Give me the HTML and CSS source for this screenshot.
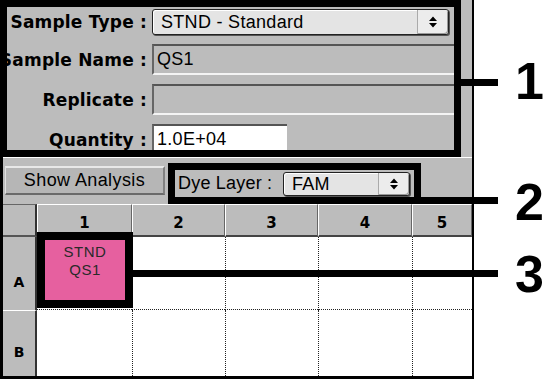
FILE: index.html
```html
<!DOCTYPE html>
<html lang="en">
<head>
    <meta charset="UTF-8">
    <meta name="viewport" content="width=device-width, initial-scale=1.0">
    <title>Sample Setup</title>
    <link rel="stylesheet" href="styles.css">
</head>
<body>
    <div class="figure">
        <div class="window">
            <!-- sample info (callout 1) -->
            <section class="panel">
                <div class="row">
                    <label class="label"><span>Sample Type :</span></label>
                    <div class="popup popup-wide">
                        <span class="popup-value">STND - Standard</span>
                        <span class="popup-arrow">
                            <svg width="10" height="14" viewBox="0 0 10 14"><path d="M1 6 L5 1.5 L9 6 Z M1 8 L5 12.5 L9 8 Z" fill="#000"/></svg>
                        </span>
                    </div>
                </div>
                <div class="row">
                    <label class="label"><span>Sample Name :</span></label>
                    <div class="field">QS1</div>
                </div>
                <div class="row">
                    <label class="label"><span>Replicate :</span></label>
                    <div class="field"></div>
                </div>
                <div class="row">
                    <label class="label"><span>Quantity :</span></label>
                    <div class="field field-white">1.0E+04</div>
                </div>
            </section>

            <div class="lower">
                <div class="toolbar">
                    <button class="btn">Show Analysis</button>
                    <!-- dye layer (callout 2) -->
                    <div class="dyebox">
                        <span class="dye-label">Dye Layer :</span>
                        <div class="popup popup-small">
                            <span class="popup-value">FAM</span>
                            <span class="popup-arrow">
                                <svg width="10" height="14" viewBox="0 0 10 14"><path d="M1 6 L5 1.5 L9 6 Z M1 8 L5 12.5 L9 8 Z" fill="#000"/></svg>
                            </span>
                        </div>
                    </div>
                </div>

                <div class="plate">
                    <div class="corner"></div>
                    <div class="colhead">1</div>
                    <div class="colhead">2</div>
                    <div class="colhead">3</div>
                    <div class="colhead">4</div>
                    <div class="colhead">5</div>

                    <div class="rowhead">A</div>
                    <div class="cell first row-a">
                        <!-- well A1 (callout 3) -->
                        <div class="well">
                            <span>STND</span>
                            <span>QS1</span>
                        </div>
                    </div>
                    <div class="cell row-a"></div>
                    <div class="cell row-a"></div>
                    <div class="cell row-a"></div>
                    <div class="cell row-a"></div>

                    <div class="rowhead rowhead-b">B</div>
                    <div class="cell first"></div>
                    <div class="cell"></div>
                    <div class="cell"></div>
                    <div class="cell"></div>
                    <div class="cell"></div>
                </div>
            </div>
        </div>

        <div class="callout callout-1"></div>
        <div class="callout callout-2"></div>
        <div class="callout callout-3"></div>
        <span class="num num-1">1</span>
        <span class="num num-2">2</span>
        <span class="num num-3">3</span>
    </div>
</body>
</html>
```

FILE: styles.css
```css
body {
    margin: 0;
    background-color: #fff;
    font-family: "Liberation Sans", Arial, sans-serif;
}

.figure {
    position: relative;
    width: 543px;
    height: 379px;
    overflow: hidden;
}

.window {
    box-sizing: border-box;
    width: 474px;
    height: 379px;
    background-color: #bcbcbc;
    border-right: 2px solid #000;
    display: flex;
    flex-direction: column;
}

/* top panel */
.panel {
    box-sizing: border-box;
    width: 461px;
    height: 157px;
    border: 7px solid #000;
    padding-top: 2px;
    overflow: hidden;
    display: flex;
    flex-direction: column;
    gap: 9px;
}

.row {
    display: flex;
    align-items: center;
    gap: 5px;
}

.label {
    flex: 0 0 140px;
    min-width: 0;
    display: flex;
    justify-content: flex-end;
    white-space: nowrap;
    font-family: "DejaVu Sans", sans-serif;
    font-weight: bold;
    font-size: 17px;
    letter-spacing: 0.2px;
    color: #000;
}

.label span {
    flex-shrink: 0;
}

.popup {
    box-sizing: border-box;
    display: flex;
    align-items: stretch;
    background-color: #e4e4e4;
    border: 1px solid #222;
    border-radius: 3px;
    box-shadow: 1px 1px 0 #555, inset 1px 1px 0 #fff;
    font-size: 18px;
    letter-spacing: 0.3px;
    color: #000;
}

.popup-wide {
    width: 297px;
    height: 26px;
}

.popup-value {
    flex: 1;
    padding-left: 8px;
    line-height: 24px;
    white-space: nowrap;
}

.popup-arrow {
    width: 30px;
    display: flex;
    align-items: center;
    justify-content: center;
    border-left: 1px solid #aaa;
    background-color: #ececec;
    border-radius: 0 3px 3px 0;
    box-shadow: inset -1px -1px 0 #999;
}

.field {
    box-sizing: border-box;
    flex: 1;
    height: 31px;
    border-top: 2px solid #555;
    border-left: 2px solid #666;
    border-bottom: 2px solid #f4f4f4;
    padding-left: 3px;
    font-size: 18px;
    letter-spacing: 0.3px;
    line-height: 27px;
    color: #000;
}

.field-white {
    flex: 0 0 135px;
    background-color: #fff;
    border-bottom: none;
}

/* lower part */
.lower {
    flex: 1;
    display: flex;
    flex-direction: column;
    border-left: 3px solid #000;
    border-bottom: 3px solid #000;
}

.toolbar {
    box-sizing: border-box;
    height: 47px;
    border-top: 1px solid #fff;
    display: flex;
    align-items: flex-start;
}

.btn {
    box-sizing: border-box;
    width: 160px;
    height: 29px;
    margin: 8px 0 0 2px;
    padding: 0;
    background-color: #b6b6b6;
    border: none;
    border-top: 2px solid #e8e8e8;
    border-left: 1px solid #e0e0e0;
    border-bottom: 2px solid #6a6a6a;
    border-right: 2px solid #808080;
    font-family: "Liberation Sans", Arial, sans-serif;
    font-size: 18px;
    letter-spacing: 0.4px;
    color: #000;
}

.dyebox {
    box-sizing: border-box;
    width: 253px;
    height: 41px;
    margin: 5px 0 0 3px;
    border: 7px solid #000;
    display: flex;
    align-items: center;
}

.dye-label {
    padding-left: 3px;
    font-size: 18px;
    letter-spacing: 0.2px;
    white-space: nowrap;
}

.popup-small {
    width: 127px;
    height: 24px;
    margin-left: auto;
    margin-right: 4px;
}

.popup-small .popup-value {
    line-height: 22px;
}

/* plate grid */
.plate {
    flex: 1;
    display: grid;
    grid-template-columns: 34px 95px 93px 93px 94px 1fr;
    grid-template-rows: 33px 73px 1fr;
    overflow: hidden;
}

.corner,
.colhead,
.rowhead {
    box-sizing: border-box;
    background-color: #bcbcbc;
    font-family: "DejaVu Sans", sans-serif;
    font-weight: bold;
    font-size: 15px;
    display: flex;
    align-items: center;
    justify-content: center;
}

.corner {
    border-top: 1px solid #666;
    border-right: 2px solid #333;
    border-bottom: 2px solid #555;
}

.colhead {
    border-top: 1px solid #fff;
    border-left: 1px solid #fff;
    border-right: 1px solid #666;
    border-bottom: 2px solid #444;
    padding-top: 5px;
}

.rowhead {
    border-right: 2px solid #333;
    padding-top: 16px;
    font-size: 14px;
}

.rowhead-b {
    border-top: 1px solid #fff;
}

.cell {
    background-color: #fff;
    border-left: 1px dotted #222;
}

.cell.first {
    border-left: none;
}

.cell.row-a {
    border-bottom: 1px dotted #222;
}

.well {
    position: relative;
    box-sizing: border-box;
    width: 96px;
    height: 76px;
    margin-top: -5px;
    border: 8px solid #000;
    background-color: #e6609f;
    display: flex;
    flex-direction: column;
    align-items: center;
    padding-top: 3px;
    font-size: 15px;
    letter-spacing: 0.5px;
    line-height: 18px;
    color: #2a2a2a;
}

/* annotations */
.callout {
    position: absolute;
    height: 7px;
    background-color: #000;
}

.callout-1 {
    left: 461px;
    top: 79px;
    width: 37px;
}

.callout-2 {
    left: 421px;
    top: 197px;
    width: 77px;
}

.callout-3 {
    left: 133px;
    top: 270px;
    width: 365px;
}

.num {
    position: absolute;
    left: 515px;
    font-family: "Liberation Sans", Arial, sans-serif;
    font-weight: bold;
    font-size: 52px;
    line-height: 52px;
    color: #000;
}

.num-1 { top: 55px; }
.num-2 { top: 176px; }
.num-3 { top: 248px; }
```
